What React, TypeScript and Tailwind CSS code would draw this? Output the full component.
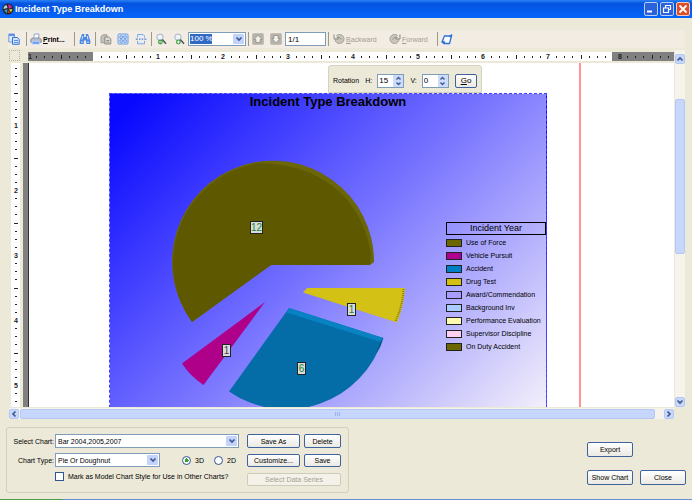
import React from "react";

const INCH = 65;

function range(n: number) {
  return Array.from({ length: n }, (_, i) => i);
}

/* Tick at eighths of an inch: dot, half-inch bar or nothing where a number goes. */
function HTicks({ start, end, origin }: { start: number; end: number; origin: number }) {
  const marks = range(100)
    .map((i) => ({ i, x: origin + (i * INCH) / 8 }))
    .filter((m) => m.x > start + 2 && m.x < end - 2 && m.i % 8 !== 0);
  return (
    <g fill="#222">
      {marks.map((m) =>
        m.i % 4 === 0 ? (
          <rect key={m.i} x={Math.round(m.x)} y="3" width="1" height="4" />
        ) : (
          <rect key={m.i} x={Math.round(m.x)} y="4" width="1" height="2" />
        ),
      )}
    </g>
  );
}

function TopRuler() {
  return (
    <svg className="h-[9px] min-w-0 flex-1" aria-hidden="true">
      <rect width="100%" height="9" fill="#fff" />
      <rect width="65" height="9" fill="#808080" />
      <rect x="584" width="100%" height="9" fill="#808080" />
      <HTicks start={0} end={584} origin={0} />
      <HTicks start={592} end={648} origin={591} />
      <g fontFamily="Liberation Sans, sans-serif" fontSize="7" fontWeight="bold" fill="#222" textAnchor="middle">
        <text x="2" y="7">1</text>
        {range(7).map((i) => (
          <text key={i} x={130 + i * INCH} y="7">{i + 1}</text>
        ))}
        <text x="592" y="7">8</text>
      </g>
    </svg>
  );
}

function SideRuler() {
  return (
    <svg className="ml-[2px] h-full w-[9px] shrink-0 bg-white" aria-hidden="true">
      <g fill="#222">
        {range(64)
          .filter((i) => i % 8 !== 0)
          .map((i) => {
            const y = Math.round(-3 + (i * INCH) / 8);
            return i % 4 === 0 ? (
              <rect key={i} x="3" y={y} width="4" height="1" />
            ) : (
              <rect key={i} x="4" y={y} width="2" height="1" />
            );
          })}
      </g>
      <g fontFamily="Liberation Sans, sans-serif" fontSize="7" fontWeight="bold" fill="#222" textAnchor="middle">
        {range(5).map((i) => (
          <text key={i} x="5" y={65 + i * INCH}>{i + 1}</text>
        ))}
      </g>
    </svg>
  );
}

function Chevron({ className = "" }: { className?: string }) {
  return (
    <svg viewBox="0 0 8 8" className={"size-2 " + className} aria-hidden="true">
      <path d="M1.5 2.5 4 5 6.5 2.5" fill="none" stroke="#3f5a8c" strokeWidth="1.7" />
    </svg>
  );
}

function DropArrow() {
  return (
    <span className="pointer-events-none absolute inset-y-px right-px flex w-[11px] items-center justify-center rounded-[1px] bg-[#c3d3fb]">
      <Chevron />
    </span>
  );
}

function ScrollButton({ label, turn }: { label: string; turn: string }) {
  return (
    <button aria-label={label} className="flex size-[10px] shrink-0 items-center justify-center rounded-[2px] border border-[#b4c8f4] bg-[#c6d6fc]">
      <Chevron className={turn} />
    </button>
  );
}

function Combo({ id, value, className }: { id: string; value: string; className: string }) {
  return (
    <div className={"relative h-[14px] border border-[#7f9db9] bg-white " + className}>
      <select id={id} className="block h-full w-full appearance-none bg-transparent px-[2px] outline-none">
        <option>{value}</option>
      </select>
      <DropArrow />
    </div>
  );
}

function PushButton({ children, className = "", disabled = false }: { children: React.ReactNode; className?: string; disabled?: boolean }) {
  return (
    <button
      disabled={disabled}
      className={
        "flex items-center justify-center rounded-[2px] border whitespace-nowrap " +
        (disabled
          ? "border-[#cfcbba] bg-[#f3f1e8] text-[#a5a294] "
          : "border-[#3f639c] bg-linear-to-b from-white to-[#ebe9e2] text-black ") +
        className
      }
    >
      {children}
    </button>
  );
}

function Spinner({ label, value }: { label: string; value: string }) {
  return (
    <label className="flex items-center gap-[5px]">
      {label}
      <span className="flex h-[14px] w-[27px] border border-[#7f9db9] bg-white">
        <input defaultValue={value} className="w-[15px] min-w-0 bg-transparent pl-px text-[8px] outline-none" />
        <span className="flex flex-1 items-center justify-center bg-[#cddbfc]">
          <svg viewBox="0 0 9 12" className="h-3 w-[9px]" aria-hidden="true">
            <path d="M2.5 4.5 4.5 2.5 6.5 4.5M2.5 7.5 4.5 9.5 6.5 7.5" fill="none" stroke="#3f5a8c" strokeWidth="1.4" />
          </svg>
        </span>
      </span>
    </label>
  );
}

function Divider() {
  return <span className="h-[14px] w-px shrink-0 bg-[#9c998c]" />;
}

function Tool({ label, children, className = "" }: { label: string; children: React.ReactNode; className?: string }) {
  return (
    <button aria-label={label} className={"flex shrink-0 items-center " + className}>
      <svg viewBox="0 0 12 12" className="size-3 shrink-0" fill="none" aria-hidden="true">
        {children}
      </svg>
    </button>
  );
}

function Magnifier({ plus }: { plus: boolean }) {
  return (
    <>
      <circle cx="5" cy="4.2" r="3.2" fill="#eef3fa" stroke="#a3b2c8" />
      <path d="m7.3 6.5 3.7 4.2" stroke="#55565e" strokeWidth="1.6" />
      <circle cx="5.4" cy="9" r="2.4" fill="#3fa043" />
      <path d={plus ? "M4 9h2.8M5.4 7.6v2.8" : "M4 9h2.8"} stroke="#fff" />
    </>
  );
}

function PageArrow({ down }: { down: boolean }) {
  return (
    <>
      <rect x="0.5" y="0.5" width="11" height="11" rx="1" fill="#b5b3ac" stroke="#c2bfb4" />
      <path d={down ? "M4 2.5h4v3h2L6 9.8 2 5.5h2z" : "M4 9.5h4v-3h2L6 2.2 2 6.5h2z"} fill="#f4f2ea" stroke="#807e78" strokeWidth=".6" />
    </>
  );
}

function Toolbar() {
  return (
    <div className="mr-[7px] ml-2 flex h-[18px] items-center bg-[#f3ece2]">
      <Tool label="Copy" className="mr-[6px]">
        <path d="M.8 1h5.700v8H.8z" fill="#dce9fd" stroke="#6c9ce4" />
        <path d="M1 2h5" stroke="#3f7ad8" strokeWidth="1.500" />
        <path d="M4.500 4.500h4.700l2 1.800v5H4.500z" fill="#d3e3ff" stroke="#3975d0" />
        <path d="M6 7.500h4M6 9.500h4" stroke="#5c92e4" />
      </Tool>
      <Divider />
      <button className="mr-[9px] ml-[3px] flex w-[35px] items-center gap-px">
        <svg viewBox="0 0 12 12" className="size-3 shrink-0" fill="none" aria-hidden="true">
          <path d="M3.500 6 4.500 1H9L8.500 6" fill="#fff" stroke="#8ca6cc" />
          <path d="M.8 6.300 3 5h6.500l1.800 1.300v3H.8z" fill="#b4bccb" stroke="#7787a2" strokeWidth=".8" />
          <path d="M2.500 8.300h6.500l1 2.900H1.800z" fill="#5c9df2" stroke="#dfeaff" strokeWidth=".7" />
        </svg>
        <span className="font-bold"><u>P</u>rint...</span>
      </button>
      <Divider />
      <Tool label="Find" className="mr-1 ml-1">
        <path d="M3 1h2.200v3h1.600V1H9l2.300 6.500V11H7.200V7.500H4.800V11H.7V7.500z" fill="#4d88e2" />
        <path d="M2 9.200h1.800M8.200 9.200H10M3.800 3l-.8 3.500M8.200 3 9 6.500" stroke="#d5e6ff" />
      </Tool>
      <Divider />
      <Tool label="Group tree" className="ml-1">
        <path d="M1 3.500 3 1.800h4v8H1z" fill="#c4c2bb" stroke="#a09e98" />
        <path d="M4.800 4h4l2 2v5h-6z" fill="#dddbd4" stroke="#8e8c86" />
        <path d="M6.300 7.500h3M6.300 9.200h3" stroke="#8e8c86" />
      </Tool>
      <Tool label="Multiple pages" className="ml-[5px]">
        <rect x="1" y="1" width="10" height="10" rx="1" fill="#d3e3fc" stroke="#6c9ce4" />
        <path d="M3 3h2.300v2.300H3zM6.900 3h2.300v2.300H6.900zM3 6.900h2.300v2.300H3zM6.900 6.900h2.300v2.300H6.900z" fill="#fff" stroke="#4b82d5" strokeWidth=".8" />
      </Tool>
      <Tool label="Page width" className="mr-1 ml-[6px]">
        <path d="M2.500 4.500V1.500h5.500l1.500 1.500v1.500M2.500 7.800v3h7v-3" fill="#e0ecff" stroke="#82a8df" />
        <path d="M.8 6.100h2M4 6.100h1.500M6.700 6.100h1.500M9.300 6.100h2" stroke="#4c84d6" strokeWidth="1.300" />
      </Tool>
      <Divider />
      <Tool label="Zoom out" className="ml-[3px]"><Magnifier plus={false} /></Tool>
      <Tool label="Zoom in" className="mr-[3px] ml-[6px]"><Magnifier plus /></Tool>
      <div className="relative h-[14px] w-[58px] shrink-0 border border-[#7f9db9] bg-white p-px">
        <select aria-label="Zoom" className="block h-[10px] w-[22px] appearance-none bg-[#316ac5] text-[8px] leading-[10px] text-white outline-none">
          <option>100 %</option>
        </select>
        <DropArrow />
      </div>
      <span className="w-[2px]" />
      <Divider />
      <Tool label="Previous page" className="ml-[3px]"><PageArrow down={false} /></Tool>
      <Tool label="Next page" className="mr-[3px] ml-[6px]"><PageArrow down /></Tool>
      <input aria-label="Page" defaultValue="1/1" className="h-[14px] w-[41px] shrink-0 border border-[#7f9db9] bg-white px-[2px] text-[8px] outline-none" />
      <span className="w-[2px]" />
      <Divider />
      <button disabled className="ml-1 flex w-[50px] items-center gap-px text-[#a19e93]">
        <svg viewBox="0 0 12 12" className="size-3 shrink-0" fill="none" aria-hidden="true">
          <circle cx="6.500" cy="6" r="4.500" fill="#c9c6be" stroke="#a3a199" />
          <path d="M1 1.500v4.500h4.500L4 4.500Q6 3 8.500 6.500" fill="#e9e6dc" stroke="#8d8b84" />
        </svg>
        <span><u>B</u>ackward</span>
      </button>
      <button disabled className="ml-[6px] flex w-[48px] items-center gap-px text-[#a19e93]">
        <svg viewBox="0 0 12 12" className="size-3 shrink-0" fill="none" aria-hidden="true">
          <circle cx="5.500" cy="6" r="4.500" fill="#c9c6be" stroke="#a3a199" />
          <path d="M11 1.500v4.500H6.500L8 4.500Q6 3 3.500 6.500" fill="#e9e6dc" stroke="#8d8b84" />
        </svg>
        <span><u>F</u>orward</span>
      </button>
      <Divider />
      <Tool label="Edit" className="ml-[3px]">
        <path d="M3.500 3h7L8.500 10.500H3L1 9z" fill="#fbfdff" stroke="#2c6fd6" strokeWidth="1.300" />
        <path d="m8.500 4 2.500-2.500M2 8.500l2 1" stroke="#2c6fd6" strokeWidth="1.400" />
      </Tool>
    </div>
  );
}

const legend = [
  { name: "Use of Force", fill: "bg-[#6b6600]" },
  { name: "Vehicle Pursuit", fill: "bg-[#b0008f]" },
  { name: "Accident", fill: "bg-[#0080c4]" },
  { name: "Drug Test", fill: "bg-[#d4c010]" },
  { name: "Award/Commendation", fill: "bg-[#a89cff]" },
  { name: "Background Inv", fill: "bg-[#a8ccff]" },
  { name: "Performance Evaluation", fill: "bg-[#fffbb0]" },
  { name: "Supervisor Discipline", fill: "bg-[#fcd0f0]" },
  { name: "On Duty Accident", fill: "bg-[#6b6600]" },
];

function ValueTag({ x, y, w, value, fill }: { x: number; y: number; w: number; value: string; fill: string }) {
  return (
    <g>
      <rect x={x + 0.5} y={y + 0.5} width={w} height="12" fill="#dcdadf" stroke="#222" />
      <text x={x + 0.5 + w / 2} y={y + 10} textAnchor="middle" fontSize="10" fontFamily="Liberation Sans, sans-serif" fill={fill}>
        {value}
      </text>
    </g>
  );
}

function Pie() {
  return (
    <svg viewBox="1 1 438 340" className="block h-[340px] w-[438px]" role="img" aria-label="Pie chart of incidents by type">
      <path d="M83 229A101 101 0 1 1 265 169L261 172H162Z" fill="#6b6608" />
      <path d="M83 229A101 101 0 0 1 150 70C205 71 251 98 262 160L261 172H162Z" fill="#5e5900" />
      <path d="M194 199.500 198 195H296Q295 213 288 229.500Z" fill="#d4c116" />
      <path d="M294.500 196Q294 212 286.500 228" fill="none" stroke="#85790c" strokeWidth="2" strokeDasharray="1 1" />
      <path d="M156 209 73 270.500Q81 283 94.500 292Z" fill="#ae0089" />
      <path d="M180 215 274 245A101 101 0 0 1 120 298.500Z" fill="#046ca6" />
      <path d="M180 215 274.500 245 271.500 249 177.500 219.500Z" fill="#0882c2" />
      <path d="M274.500 245 271.500 249 267 261Q272 254 274.500 245Z" fill="#055584" />
      <ValueTag x={141} y={128} w={12} value="12" fill="#128a22" />
      <ValueTag x={238} y={210} w={8} value="1" fill="#128a22" />
      <ValueTag x={188} y={269} w={8} value="6" fill="#128a22" />
      <ValueTag x={113} y={251} w={8} value="1" fill="#444" />
    </svg>
  );
}

function Chart() {
  return (
    <section className="relative ml-[80px] h-[340px] w-[438px] overflow-hidden border border-dashed border-[#4040ff] bg-[linear-gradient(135deg,#0808ff_4%,#7a76ff_50%,#f6f2fa_98%)]">
      <h2 className="absolute inset-x-0 top-px text-center text-[13px] leading-[14px] font-bold">Incident Type Breakdown</h2>
      <Pie />
      <div className="absolute top-[128px] right-0 w-[100px]">
        <h3 className="mb-px h-[13px] border border-black text-center text-[9px] leading-[11px]">Incident Year</h3>
        <ul>
          {legend.map((item) => (
            <li key={item.name} className="flex h-[13px] items-center gap-1 whitespace-nowrap">
              <span className={"h-2 w-4 shrink-0 border border-[#222] " + item.fill} />
              {item.name}
            </li>
          ))}
        </ul>
      </div>
    </section>
  );
}

function RotationPanel() {
  return (
    <form className="absolute top-[2px] left-[300px] flex h-7 w-[154px] items-center justify-between rounded-t-[3px] border border-[#d5d2c0] bg-[#ece9d8] pt-[3px] pr-1 pl-1">
      <span>Rotation</span>
      <Spinner label="H:" value="15" />
      <Spinner label="V:" value="0" />
      <PushButton className="h-[14px] w-[22px] text-[8px]"><span><u>G</u>o</span></PushButton>
    </form>
  );
}

function TitleBar() {
  return (
    <header className="flex h-[18px] shrink-0 items-center bg-linear-to-b from-[#2a80f5] from-0% via-[#0453e0] via-20% to-[#0466fb] pr-[2px] pl-[2px] text-white">
      <svg viewBox="0 0 12 12" className="mr-px size-3" aria-hidden="true">
        <circle cx="6" cy="6" r="5.500" fill="#222" />
        <path d="M1.500 6a4 4 0 0 1 3-4l1 3z" fill="#b4cbe0" />
        <path d="M6 1.500a4 4 0 0 1 4 3L7 6z" fill="#cc269a" />
        <path d="M7 6.500 10.500 6 9 9.500z" fill="#e9d43c" />
        <path d="M2 7.500 5.500 6 5 10.500z" fill="#3d9caf" />
        <path d="M6 7l2 3H6z" fill="#d83a2a" />
      </svg>
      <h1 className="flex-1 text-[9px] font-bold">Incident Type Breakdown</h1>
      <div className="flex gap-[2px]">
        <button aria-label="Minimize" className="size-[14px] rounded-[2px] border border-[#b8ccf6] bg-[#2a62da]">
          <svg viewBox="0 0 12 12" className="size-3" aria-hidden="true"><path d="M2 8.500h5" stroke="#fff" strokeWidth="2" /></svg>
        </button>
        <button aria-label="Restore" className="size-[14px] rounded-[2px] border border-[#b8ccf6] bg-[#2a62da]">
          <svg viewBox="0 0 12 12" className="size-3" fill="none" stroke="#fff" aria-hidden="true"><path d="M4.500 4.500V2.500h5v4h-2M2.500 5h5v4.500h-5z" strokeWidth="1.200" /></svg>
        </button>
        <button aria-label="Close window" className="size-[14px] rounded-[2px] border border-[#f3cabd] bg-[#e04e28]">
          <svg viewBox="0 0 12 12" className="size-3" aria-hidden="true"><path d="m2.500 2.500 7 7m0-7-7 7" stroke="#fff" strokeWidth="1.800" /></svg>
        </button>
      </div>
    </header>
  );
}

function Radio({ label, checked = false }: { label: string; checked?: boolean }) {
  return (
    <label className="flex items-center gap-1">
      <input
        type="radio"
        name="dimension"
        defaultChecked={checked}
        className="size-[9px] appearance-none rounded-full border border-[#2f5590] bg-white checked:bg-[radial-gradient(circle,#2fa32f_0_2px,#fff_2px)]"
      />
      {label}
    </label>
  );
}

function ChartSettings() {
  return (
    <section className="flex h-[66px] w-[343px] gap-2 rounded-[3px] border border-[#d3d0be] pt-[6px] pr-[7px] pl-[5px]">
      <div className="flex flex-1 flex-col gap-[5px]">
        <div className="flex items-center">
          <label htmlFor="chart" className="w-[43px] pr-px text-right whitespace-nowrap">Select Chart:</label>
          <Combo id="chart" value="Bar 2004,2005,2007" className="flex-1" />
        </div>
        <div className="flex items-center">
          <label htmlFor="type" className="w-[43px] pr-px text-right whitespace-nowrap">Chart Type:</label>
          <Combo id="type" value="Pie Or Doughnut" className="w-[105px]" />
          <div className="flex flex-1 justify-end gap-[10px] pr-[3px]">
            <Radio label="3D" checked />
            <Radio label="2D" />
          </div>
        </div>
        <label className="flex items-center gap-1 pl-[43px] whitespace-nowrap">
          <input type="checkbox" className="size-[9px] appearance-none border border-[#2f5590] bg-white" />
          Mark as Model Chart Style for Use in Other Charts?
        </label>
      </div>
      <div className="grid w-[94px] grid-cols-[53px_37px] content-start gap-x-1 gap-y-[6px]">
        <PushButton className="h-[14px]">Save As</PushButton>
        <PushButton className="h-[14px]">Delete</PushButton>
        <PushButton className="h-[13px]">Customize...</PushButton>
        <PushButton className="h-[13px]">Save</PushButton>
        <PushButton disabled className="col-span-2 h-[13px]">Select Data Series</PushButton>
      </div>
    </section>
  );
}

export default function App() {
  return (
    <div className="flex h-screen min-w-0 flex-col overflow-hidden bg-[#ece9d8] font-['Liberation_Sans',Arial,sans-serif] text-[7px] leading-[9px] text-black">
      <TitleBar />
      <div className="h-3 shrink-0" />
      <Toolbar />

      <main className="mt-[2px] mr-[7px] ml-[9px] flex min-h-0 flex-1 gap-px">
        <div className="flex min-w-0 flex-1 flex-col">
          <div className="flex h-[11px] shrink-0 items-end gap-2">
            <span className="size-[11px] shrink-0 border border-dotted border-[#b5b2a4]" />
            <TopRuler />
          </div>
          <div className="mt-[2px] flex min-h-0 flex-1 gap-[3px]">
            <SideRuler />
            <div className="relative min-w-0 flex-1 overflow-hidden border-l-[5px] border-[#808080] bg-white">
              <div className="h-full w-[553px] border-r-2 border-l border-r-[#ff9494] border-l-[#333] pt-[30px]">
                <Chart />
              </div>
              <RotationPanel />
            </div>
          </div>
        </div>
        <div className="flex w-[10px] shrink-0 flex-col bg-[#f5f3ec] pt-1">
          <ScrollButton label="Scroll up" turn="rotate-180" />
          <span className="mt-[35px] h-[155px] rounded-[2px] border border-[#b4c8f4] bg-[#c6d6fc]" />
          <span className="flex-1" />
          <ScrollButton label="Scroll down" turn="" />
        </div>
      </main>

      <div className="mt-px mr-[18px] ml-[9px] flex h-[11px] shrink-0 items-center gap-px bg-[#f5f3ec]">
        <ScrollButton label="Scroll left" turn="rotate-90" />
        <span className="flex h-[10px] flex-1 items-center justify-center gap-px rounded-[2px] border border-[#b4c8f4] bg-[#c6d6fc]">
          <i className="h-1 w-px bg-[#9ab4ee]" />
          <i className="h-1 w-px bg-[#9ab4ee]" />
          <i className="h-1 w-px bg-[#9ab4ee]" />
        </span>
        <span className="w-[7px]" />
        <ScrollButton label="Scroll right" turn="-rotate-90" />
      </div>

      <footer className="mt-2 flex shrink-0 items-start justify-between pr-[6px] pb-[6px] pl-[6px]">
        <ChartSettings />
        <div className="grid grid-cols-[46px_46px] gap-x-[7px] gap-y-[13px] pt-[15px]">
          <PushButton className="h-[15px]">Export</PushButton>
          <span />
          <PushButton className="h-[15px]">Show Chart</PushButton>
          <PushButton className="h-[15px]">Close</PushButton>
        </div>
      </footer>
      <div className="flex h-px shrink-0 bg-[#6a8fd8]">
        <span className="w-[62px] bg-[#4f9c45]" />
      </div>
    </div>
  );
}
